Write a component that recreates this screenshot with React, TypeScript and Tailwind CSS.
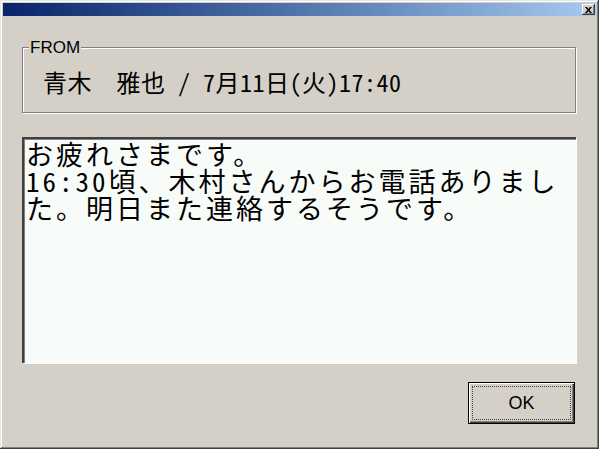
import React from "react";

const jp = "font-['Noto_Sans_CJK_JP','Noto_Sans',sans-serif] [font-feature-settings:'hwid']";

export default function App() {
  return (
    <div className="w-[599px] h-[449px] bg-[#d4d0c8] p-[3px] flex flex-col shadow-[inset_-1px_-1px_0_#404040,inset_1px_1px_0_#e8e6e0,inset_-2px_-2px_0_#808080,inset_2px_2px_0_#ffffff]">
      {/* title bar */}
      <div className="h-[13px] flex items-center justify-end bg-gradient-to-r from-[#0a246a] to-[#a6caf0]">
        <button className="w-[13px] h-[11px] mr-px bg-[#d4d0c8] flex items-center justify-center shadow-[inset_-1px_-1px_0_#404040,inset_1px_1px_0_#ffffff,inset_-2px_-2px_0_#808080]">
          <svg width="7" height="6" viewBox="0 0 7 6">
            <path d="M0 0h2l1.5 2L5 0h2L4.5 3 7 6H5L3.5 4 2 6H0l2.5-3z" fill="#000" />
          </svg>
        </button>
      </div>

      <div className="flex flex-col pl-[19px] pr-[20px]">
        {/* FROM group */}
        <div className="relative mt-[31px] h-[66px] border border-[#808080] shadow-[inset_1px_1px_0_#ffffff,1px_1px_0_#ffffff] flex items-center pl-[20px]">
          <span className="absolute -top-[9px] left-[6px] px-px bg-[#d4d0c8] font-['Liberation_Sans',Arial,sans-serif] text-[17px] leading-[17px] text-black">
            FROM
          </span>
          <p className={`${jp} text-[24px] leading-[26px] tracking-[0.5px] text-black mt-[3px] whitespace-nowrap`}>
            青木<span className="[font-feature-settings:normal]">　</span>雅也 / 7月11日(火)17:40
          </p>
        </div>

        {/* message */}
        <div className="mt-[24px] h-[226px] bg-[#f8fcf8] border-t-2 border-l-2 border-t-[#404040] border-l-[#404040] shadow-[inset_1px_1px_0_#808080,1px_1px_0_#ffffff] pl-[2px] pt-px">
          <div className={`${jp} text-[27px] leading-[27px] tracking-[3px] text-black whitespace-nowrap`}>
            <p>お疲れさまです。</p>
            <p>16:30頃、木村さんからお電話ありまし</p>
            <p>た。明日また連絡するそうです。</p>
          </div>
        </div>

        {/* OK */}
        <div className="flex justify-end mt-[19px] pr-px">
          <button className="w-[107px] h-[42px] bg-[#d4d0c8] border border-black p-[3px] shadow-[inset_1px_1px_0_#ffffff,inset_-1px_-1px_0_#404040,inset_-2px_-2px_0_#808080]">
            <span className="flex h-full items-center justify-center border border-dotted border-[#404040] font-['Liberation_Sans',Arial,sans-serif] text-[18px] text-black">
              OK
            </span>
          </button>
        </div>
      </div>
    </div>
  );
}
